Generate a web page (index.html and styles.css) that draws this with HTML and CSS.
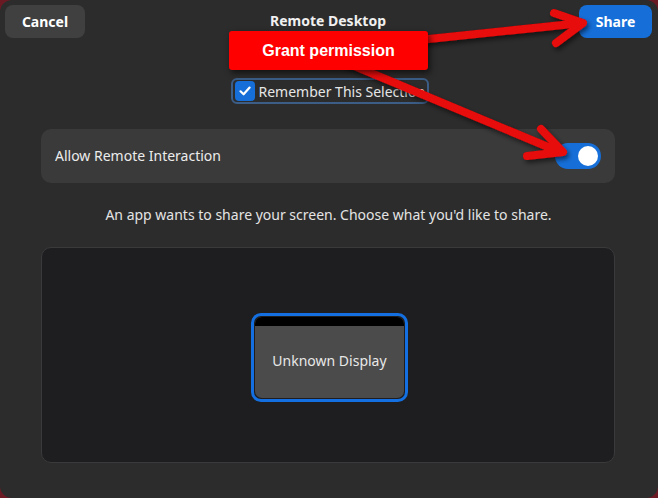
FILE: index.html
```html
<!DOCTYPE html>
<html>
<head>
<meta charset="utf-8">
<link rel="stylesheet" href="styles.css">
</head>
<body>
<div class="window">
  <header class="header">
    <button class="btn btn-cancel">Cancel</button>
    <div class="title">Remote Desktop</div>
    <button class="btn btn-share">Share</button>
  </header>
  <div class="remember-wrap">
    <label class="remember">
      <span class="check">
        <svg width="14" height="14" viewBox="0 0 14 14"><path d="M2.5 7.3 L5.6 10.3 L11.6 3.6" fill="none" stroke="#fff" stroke-width="2.2" stroke-linecap="round" stroke-linejoin="round"/></svg>
      </span>
      <span class="remember-text">Remember This Selection</span>
    </label>
  </div>
  <div class="card">
    <span class="card-label">Allow Remote Interaction</span>
    <span class="switch"><span class="knob"></span></span>
  </div>
  <p class="desc">An app wants to share your screen. Choose what you'd like to share.</p>
  <div class="panel">
    <div class="monitor">
      <div class="monitor-inner">
        <div class="monitor-bar"></div>
        <div class="monitor-body">Unknown Display</div>
      </div>
    </div>
  </div>

  <svg class="arrows" width="658" height="498" viewBox="0 0 658 498">
    <defs>
      <filter id="sh" x="-20%" y="-20%" width="140%" height="140%">
        <feDropShadow dx="2" dy="3" stdDeviation="2.5" flood-color="#000" flood-opacity="0.55"/>
      </filter>
    </defs>
    <g filter="url(#sh)" stroke="#e80808" stroke-width="8" stroke-linecap="round" stroke-linejoin="round" fill="none">
      <path d="M400 42 L582 23"/>
      <path d="M554 13 L583 23 L556 43"/>
      <path d="M340 60 L560 152"/>
      <path d="M541 129 L563 152 L527 156"/>
    </g>
  </svg>
  <div class="grant">Grant permission</div>
</div>
</body>
</html>
```

FILE: styles.css
```css
* { box-sizing: border-box; }
html, body {
  margin: 0;
  padding: 0;
  width: 658px;
  height: 498px;
  overflow: hidden;
  background: #6b1a24;
}
.window {
  position: relative;
  width: 658px;
  height: 498px;
  background: #2c2c2c;
  border-radius: 12px;
  font-family: "Noto Sans", "Open Sans", sans-serif;
  color: #ffffff;
  display: flex;
  flex-direction: column;
  padding: 5px 6px 0 5px;
}
.header {
  display: flex;
  align-items: center;
  justify-content: space-between;
  height: 33px;
}
.btn {
  height: 33px;
  border: none;
  border-radius: 8px;
  font-family: "Noto Sans", sans-serif;
  font-weight: 700;
  font-size: 14px;
  color: #ffffff;
  padding: 0;
}
.btn-cancel { width: 80px; background: #404040; }
.btn-share { width: 73px; background: #166fd8; }
.title {
  font-weight: 700;
  font-size: 14px;
  color: #f0f0f0;
  margin-right: 8px;
  margin-top: -2px;
}
.remember-wrap {
  display: flex;
  justify-content: center;
  margin-top: 40px;
  padding-left: 2px;
}
.remember {
  display: flex;
  align-items: center;
  gap: 4px;
  width: 198px;
  height: 26px;
  border: 2px solid #3b5d86;
  border-radius: 6px;
  padding-left: 2px;
  overflow: hidden;
}
.check {
  width: 20px;
  height: 20px;
  border-radius: 4px;
  background: #166fd8;
  display: flex;
  align-items: center;
  justify-content: center;
  flex: none;
}
.remember-text {
  font-size: 14px;
  color: #e6e6e6;
  white-space: nowrap;
}
.card {
  margin: 25px 37px 0 36px;
  height: 54px;
  border-radius: 10px;
  background: #3a3a3a;
  display: flex;
  align-items: center;
  justify-content: space-between;
  padding: 0 14px 2px 14px;
}
.card-label {
  font-size: 14px;
  color: #ececec;
}
.switch {
  width: 46px;
  height: 26px;
  border-radius: 13px;
  background: #166fd8;
  display: flex;
  align-items: center;
  justify-content: flex-end;
  padding-right: 3px;
  margin-top: 2px;
}
.knob {
  width: 20px;
  height: 20px;
  border-radius: 50%;
  background: #ffffff;
}
.desc {
  margin: 22px 0 0 0;
  text-align: center;
  font-size: 14px;
  color: #e4e4e4;
  line-height: 20px;
}
.panel {
  margin: 22px 37px 0 36px;
  height: 216px;
  background: #1e1e20;
  border: 1px solid #3a3a3c;
  border-radius: 10px;
  display: flex;
  align-items: center;
  justify-content: center;
  padding-top: 4px;
  padding-left: 3px;
}
.monitor {
  width: 157px;
  height: 89px;
  border: 3px solid #1470e0;
  border-radius: 10px;
  padding: 1px;
  background: #1e1e20;
}
.monitor-inner {
  width: 100%;
  height: 100%;
  border-radius: 7px;
  overflow: hidden;
  display: flex;
  flex-direction: column;
  background: #4b4b4b;
}
.monitor-bar {
  height: 9px;
  background: #000000;
  flex: none;
}
.monitor-body {
  flex: 1;
  display: flex;
  align-items: center;
  justify-content: center;
  font-size: 14px;
  color: #e8e8e8;
  padding-bottom: 2px;
}
.arrows {
  position: absolute;
  left: 0;
  top: 0;
  pointer-events: none;
}
.grant {
  position: absolute;
  left: 229px;
  top: 31px;
  width: 199px;
  height: 39px;
  background: #ff0000;
  border-radius: 3px;
  box-shadow: 2px 3px 6px rgba(0,0,0,0.6);
  font-family: "Liberation Sans", Arial, sans-serif;
  font-weight: 700;
  font-size: 16px;
  color: #ffffff;
  display: flex;
  align-items: center;
  justify-content: center;
  padding-top: 1px;
}
```
